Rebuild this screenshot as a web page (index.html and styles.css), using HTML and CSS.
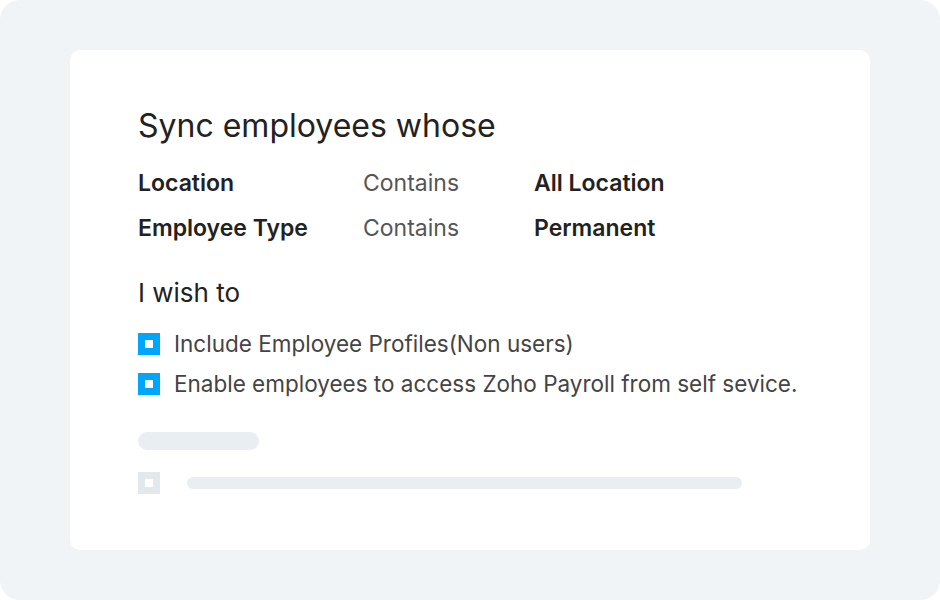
FILE: index.html
```html
<!DOCTYPE html>
<html>
<head>
<meta charset="utf-8">
<link rel="stylesheet" href="styles.css">
</head>
<body>
<div class="frame">
  <div class="card">
    <h1 class="title">Sync employees whose</h1>
    <div class="criteria">
      <div class="label">Location</div>
      <div class="op">Contains</div>
      <div class="value">All Location</div>
      <div class="label">Employee Type</div>
      <div class="op">Contains</div>
      <div class="value">Permanent</div>
    </div>
    <h2 class="subtitle">I wish to</h2>
    <ul class="options">
      <li class="option"><span class="check"></span>Include Employee Profiles(Non users)</li>
      <li class="option"><span class="check"></span>Enable employees to access Zoho Payroll from self sevice.</li>
    </ul>
    <div class="skeleton">
      <div class="sk-bar"></div>
      <div class="sk-row">
        <span class="check check-muted"></span>
        <div class="sk-line"></div>
      </div>
    </div>
  </div>
</div>
</body>
</html>
```

FILE: styles.css
```css
html, body {
  margin: 0;
  padding: 0;
  background: #ffffff;
}
body {
  font-family: Inter, "Noto Sans", sans-serif;
  color: #222;
}
.frame {
  width: 940px;
  height: 600px;
  box-sizing: border-box;
  background: #f0f4f7;
  border-radius: 20px;
  padding: 50px 70px;
}
.card {
  background: #ffffff;
  border-radius: 10px;
  height: 500px;
  box-sizing: border-box;
  padding: 56px 68px 0;
}
.title {
  margin: 0;
  font-size: 32px;
  font-weight: 400;
  line-height: 40px;
  color: #222;
}
.criteria {
  margin-top: 19px;
  display: grid;
  grid-template-columns: 225px 171px auto;
  row-gap: 9px;
  font-size: 23px;
  line-height: 36px;
}
.label, .value {
  font-weight: 600;
  color: #222;
}
.op {
  color: #555;
}
.subtitle {
  margin: 29px 0 0;
  font-size: 26px;
  font-weight: 400;
  line-height: 36px;
  color: #222;
}
.options {
  list-style: none;
  margin: 17px 0 0;
  padding: 0;
  display: flex;
  flex-direction: column;
  gap: 8px;
}
.option {
  display: flex;
  align-items: center;
  gap: 14px;
  font-size: 22.5px;
  line-height: 32px;
  color: #444;
}
.check {
  width: 22px;
  height: 22px;
  box-sizing: border-box;
  border: 7px solid #00a6fa;
  background: #fff;
  flex: none;
}
.check-muted {
  border-color: #e3e8ed;
}
.skeleton {
  margin-top: 32px;
}
.sk-bar {
  width: 121px;
  height: 18px;
  border-radius: 9px;
  background: #e9eef2;
}
.sk-row {
  margin-top: 22px;
  display: flex;
  align-items: center;
  gap: 27px;
}
.sk-line {
  width: 555px;
  height: 12px;
  border-radius: 6px;
  background: #e9eef2;
}
```
